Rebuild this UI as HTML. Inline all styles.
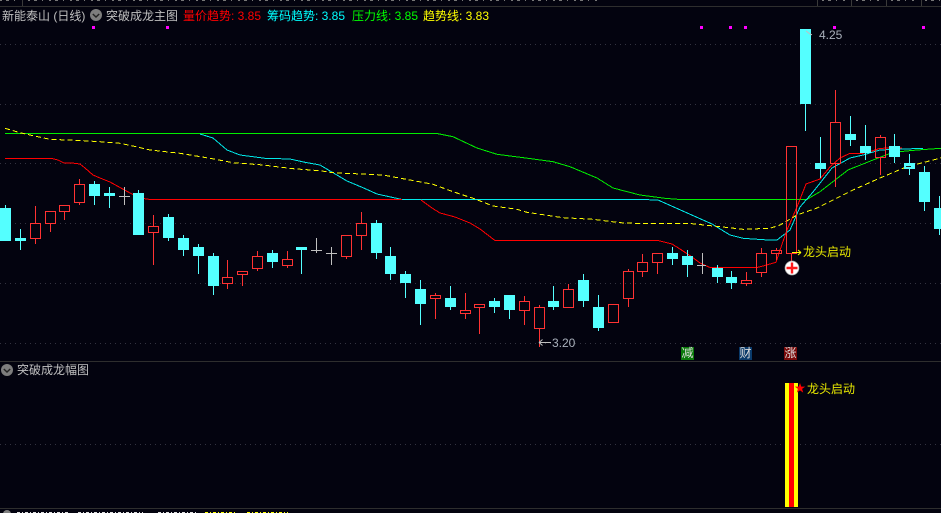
<!DOCTYPE html>
<html><head><meta charset="utf-8"><style>
html,body{margin:0;padding:0;background:#03030f}
#w{position:relative;width:941px;height:513px;overflow:hidden;background:#03030f;font:12px/14px "Liberation Sans","WenQuanYi Zen Hei","Noto Sans CJK SC",sans-serif;color:#c0c0c0}
#w span{position:absolute;white-space:nowrap}
svg{position:absolute;left:0;top:0}
.t{width:13px;height:13px;color:#ddd;text-align:center;line-height:13px}
</style></head><body><div id="w">
<svg width="941" height="513" viewBox="0 0 941 513" shape-rendering="crispEdges" fill="none">
<path stroke="#2e2e2e" d="M0 6.5H941M0 361.5H941M0 508.500H941"/>
<path stroke="#3a3a3a" d="M22.5 0V6M817.5 0V6M851.5 0V6M886.5 0V6M921.5 0V6"/>
<path stroke="#777" stroke-dasharray="2 4 3 5 1 6" d="M0 .5H18M28 .5H600M822 .5H848M856 .5H882M891 .5H918M925 .5H941"/>
<path stroke="#333340" stroke-dasharray="1 4" d="M0 44.5H941M0 104.5H941M0 163.5H941M0 223.5H941M0 283.5H941M0 343.5H941M0 444.5H941"/>
<path stroke="#e0e0e0" stroke-dasharray="3 2 1 2" d="M17 512.500H70M78 512.500H143M158 512.500H198"/>
<path stroke="#ffff00" stroke-dasharray="3 2 1 2" d="M205 512.500H237M247 512.500H288"/>
<circle cx="7" cy="514" r="4" fill="#808080" shape-rendering="auto"/>
<path fill="#ff00ff" d="M92 26h3v3h-3zM166 26h3v3h-3zM700 26h3v3h-3zM729 26h3v3h-3zM744 26h3v3h-3zM833 26h3v3h-3zM922 26h3v3h-3z"/>

<g stroke-width="1">
<polyline stroke="#00ee00" points="5,133.5 437,133.5 453,136.7 477,148 497,154.3 528,158.3 553,161.7 570,166.7 597,178 613,188 640,195 665,198.3 680,199.5 806.7,199.5 820,191.7 848,170 873,160 893,152.3 917,150 941,148.3"/>
<polyline stroke="#00e8e8" points="200,134 213,138 227,150 240,155 265,158.3 290,159 305,162.3 320,165 333,172.7 347,181 363,187.7 377,194 402,199.5 640,199.5 658,200 712,224 730,235 743,238.3 768,240 777,240 790,230 800,207 813,192 832,168 850,158 863,155 880,150 923,148.3"/>
<polyline stroke="#ff0000" points="5,158.5 52,158.5 58,160 64,163 72,163 80,164 85,168 93,175 100,178 110,182 130,193 140,198 150,199.5 402,199.5"/>
<polyline stroke="#ff0000" points="421,200 432,208 440,213 455,217 470,223 480,229 495,240.5 658,240.5 672,244 680,249 692,257 700,263 710,267.5 757,267.5 763,266 776,262.3 780,250 787,230 797,207 806,184 820,179 830,167 840,158 850,153.3 863,153.3 873,150.7 880,148.3 902,148"/>
<polyline stroke="#ffff00" stroke-dasharray="5 3" points="5,128.3 20,132.7 30,135 50,139.3 83,140.7 100,141.7 120,143.3 133,146 150,150 180,153.3 210,158.3 233,162.7 263,165 293,168.7 320,170.7 333,172.7 383,175 403,178.7 433,184.3 453,191.7 473,198.3 493,206 517,209.3 527,212.3 563,217.7 593,219.3 620,222.7 640,223.5 690,223.5 720,226.7 743,229.3 770,228.3 780,225 797,215 817,208 853,190 880,178 907,166.7 941,158"/>
</g>

<path stroke="#54ffff" d="M5.5 205V208M20.5 229V250M94.5 181V205M109.5 187V208M138.5 190V193M168.5 214V241M183.5 235V256M198.5 244V274M213.5 253V295M272.5 250V268M301.5 247V274M376.5 220V259M390.5 247V280M405.5 271V298M420.5 280V325M450.5 286V310M494.5 298V313M509.5 295V319M553.5 286V310M583.5 274V307M598.5 295V331M672.5 247V265M687.5 250V277M717.5 265V283M731.5 271V289M805.5 29V131M820.5 137V178M850.5 116V146M865.5 125V160M894.5 134V163M909.5 154V175M924.5 166V211M939.5 196V235"/>
<path fill="#54ffff" d="M0 208h11v33h-11zM15 238h11v3h-11zM89 184h11v12h-11zM104 193h11v3h-11zM133 193h11v42h-11zM163 217h11v21h-11zM178 238h11v12h-11zM193 247h11v9h-11zM208 256h11v30h-11zM267 253h11v9h-11zM296 247h11v3h-11zM371 223h11v30h-11zM385 256h11v18h-11zM400 274h11v9h-11zM415 289h11v15h-11zM445 298h11v9h-11zM489 301h11v6h-11zM504 295h11v15h-11zM548 301h11v6h-11zM578 280h11v21h-11zM593 307h11v21h-11zM667 253h11v6h-11zM682 256h11v9h-11zM712 268h11v9h-11zM726 277h11v6h-11zM800 29h11v75h-11zM815 163h11v6h-11zM845 134h11v6h-11zM860 146h11v7h-11zM889 146h11v11h-11zM904 163h11v6h-11zM919 172h11v30h-11zM934 208h7v21h-7z"/>
<path stroke="#c0c0c0" d="M119 196.5H130M124.5 187V205M697 265.5H706M702.5 253V274M311 250.5H322M316.5 238V253M326 253.5H337M331.5 247V265"/>
<path stroke="#ff3232" d="M35.5 206V223M35.5 238V244M50.5 223V232M64.5 211V220M79.5 179V184M79.5 202V205M153.5 215V226M153.5 232V265M227.5 260V277M227.5 283V289M242.5 274V286M257.5 251V256M257.5 268V271M287.5 251V259M287.5 265V268M346.5 256V259M361.5 212V223M361.5 235V250M435.5 293V295M435.5 298V319M465.5 293V310M465.5 313V319M479.5 307V334M524.5 296V301M524.5 310V325M539.5 305V307M539.5 328V347M568.5 284V289M628.5 269V271M628.5 298V307M642.5 254V262M642.5 271V277M657.5 262V274M746.5 272V280M746.5 283V286M761.5 248V253M761.5 272V277M776.5 248V250M776.5 253V260M791.5 253V262M835.5 90V122M835.5 163V187M880.5 135V137M880.5 157V175"/>
<path stroke="#ff3232" d="M30.5 223.5h10v15h-10zM45.5 211.5h10v12h-10zM59.5 205.5h10v6h-10zM74.5 184.5h10v18h-10zM148.5 226.5h10v6h-10zM222.5 277.5h10v6h-10zM237.5 271.5h10v3h-10zM252.5 256.5h10v12h-10zM282.5 259.5h10v6h-10zM341.5 235.5h10v21h-10zM356.5 223.5h10v12h-10zM430.5 295.5h10v3h-10zM460.5 310.5h10v3h-10zM474.5 304.5h10v3h-10zM519.5 301.5h10v9h-10zM534.5 307.5h10v21h-10zM563.5 289.5h10v18h-10zM608.5 304.5h10v18h-10zM623.5 271.5h10v27h-10zM637.5 262.5h10v9h-10zM652.5 253.5h10v9h-10zM741.5 280.5h10v3h-10zM756.5 253.5h10v19h-10zM771.5 250.5h10v3h-10zM786.5 146.5h10v107h-10zM830.5 122.5h10v41h-10zM875.5 137.5h10v20h-10z"/>
<path stroke="#222" d="M906 166.5h5"/>
<path fill="#ffff00" d="M785 383h13v124h-13z"/>
<path fill="#ff0000" d="M789 383h5v124h-5z"/>
<g shape-rendering="auto">
<circle cx="792" cy="268" r="7" fill="#fff" stroke="#999" stroke-width=".7"/>
<path d="M786.5 268h11M792 262.500v11" stroke="#ff1a1a" stroke-width="2.4"/>
<circle cx="96" cy="15" r="6" fill="#7d7d7d"/>
<path d="M92.800 14l3.200 3 3.200-3" stroke="#222" stroke-width="1.4"/>
<circle cx="7" cy="370" r="6" fill="#7d7d7d"/>
<path d="M3.800 369l3.200 3 3.200-3" stroke="#222" stroke-width="1.4"/>
<path d="M539 342.500h12M539 342.500l3.500-3M539 342.500l3.500 3" stroke="#c0c0c0"/>
<path d="M806 31l4 3 2 .8" stroke="#c0c0c0"/>
<path d="M792 252.500h9M801 252.500l-3-2.500M801 252.500l-3 2.500" stroke="#ffff00"/>
<path fill="#ff0000" d="M800 383l1.300 3.600h3.900l-3.100 2.300 1.100 3.700-3.200-2.200-3.200 2.200 1.100-3.700-3.100-2.300h3.900z"/>
</g>
</svg>
<span style="left:2px;top:9px">新能泰山 (日线)</span>
<span style="left:106px;top:9px">突破成龙主图</span>
<span style="left:183px;top:9px;color:#f00">量价趋势: 3.85</span>
<span style="left:267px;top:9px;color:#0ff">筹码趋势: 3.85</span>
<span style="left:352px;top:9px;color:#0f0">压力线: 3.85</span>
<span style="left:423px;top:9px;color:#ff0">趋势线: 3.83</span>
<span style="left:17px;top:363px">突破成龙幅图</span>
<span style="left:552px;top:336px;color:#a9b0bb">3.20</span>
<span style="left:819px;top:28px;color:#a9b0bb">4.25</span>
<span style="left:803px;top:245px;color:#e8e800">龙头启动</span>
<span style="left:807px;top:382px;color:#e8e800">龙头启动</span>
<span class="t" style="left:681px;top:347px;background:#0a7a0a">减</span>
<span class="t" style="left:739px;top:347px;background:#0a3a6a">财</span>
<span class="t" style="left:784px;top:347px;background:#7a0a0a">涨</span>
</div></body></html>
